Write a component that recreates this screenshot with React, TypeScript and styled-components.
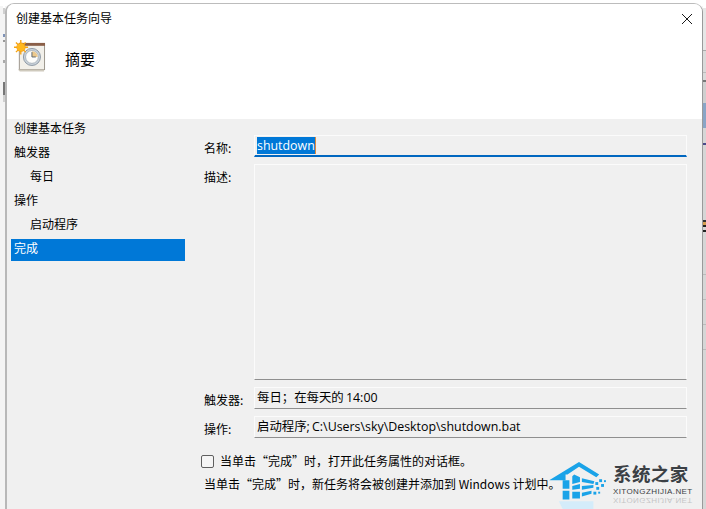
import React from 'react';
import styled, { createGlobalStyle } from 'styled-components';

const GlobalStyle = createGlobalStyle`
  html, body {
    margin: 0;
    padding: 0;
    background: #fff;
    overflow: hidden;
  }
`;

const FONT = `"Noto Sans CJK SC", "Noto Sans", sans-serif`;
const LATIN = `"Open Sans", "Noto Sans CJK SC", sans-serif`;

// slivers of whatever window lies behind the dialog
const Desktop = styled.div`
  position: relative;
  width: 706px;
  height: 509px;
  overflow: hidden;
  box-sizing: border-box;
  padding: 3px 3px 0 5px;
  font-family: ${FONT};
  font-size: 12px;
  color: #000;
  background-color: #f4f4f4;
  background-repeat: no-repeat;
  background-size: 2px 100%, 3px 100%, 100% 6px;
  background-position: 3px 0, right top, left top;
  background-image:
    linear-gradient(
      to bottom,
      #fff 0 8px, #cfcfcf 8px 14px, #f4f4f4 14px 34px, #7f93b8 34px 37px, #f4f4f4 37px 40px,
      #999 40px 42px, #f4f4f4 42px 60px, #aaa 60px 63px, #f4f4f4 63px 82px, #777 82px 95px,
      #d0d0d0 95px 102px, #f4f4f4 102px 100%
    ),
    linear-gradient(
      to bottom,
      #fff 0 8px, #e6e6e6 8px 50px, #aaa 50px 51px, #dadada 51px 72px, #bbb 72px 73px,
      #dadada 73px 80px, #777 80px 82px, #cfcfcf 82px 103px, #8aa5c6 103px 128px,
      #d6d6d6 128px 143px, #4a4a8a 143px 145px, #d6d6d6 145px 220px, #333 220px 222px,
      #d8a050 222px 225px, #222 225px 227px, #d6d6d6 227px 230px, #222 230px 232px, #d6d6d6 232px 274px,
      #bbb 274px 275px, #d6d6d6 275px 299px, #bbb 299px 300px, #d6d6d6 300px 324px,
      #bbb 324px 325px, #d6d6d6 325px 349px, #bbb 349px 350px, #d6d6d6 350px 100%
    ),
    linear-gradient(#fff, #fff);
`;

const Dialog = styled.div`
  height: 506px;
  display: flex;
  flex-direction: column;
  box-sizing: border-box;
  border-style: solid;
  border-color: #bcbcbc #9a9a9a transparent #b8b8b8;
  border-width: 1px 1px 0 2px;
  border-radius: 9px 9px 0 0;
  background: #f0f0f0;
  overflow: hidden;
`;

const Header = styled.header`
  flex: none;
  height: 115px;
  background: #fff;
  box-sizing: border-box;
  padding: 6px 9px 0 9px;
`;

const TitleBar = styled.div`
  display: flex;
  align-items: center;
  justify-content: space-between;
  height: 16px;
  line-height: 16px;
`;

const CloseButton = styled.button`
  display: flex;
  width: 12px;
  height: 12px;
  padding: 0;
  margin-top: 1px;
  border: 0;
  background: none;
`;

const Banner = styled.div`
  display: flex;
  align-items: center;
  margin: 14px 0 0 -2px;
  gap: 19px;
`;

const Heading = styled.h1`
  margin: 0;
  font-size: 15px;
  font-weight: 400;
  line-height: 20px;
  position: relative;
  top: 3px;
`;

const Body = styled.div`
  flex: 1;
  display: flex;
`;

const Sidebar = styled.nav`
  flex: none;
  width: 181px;
  box-sizing: border-box;
  padding-left: 4px;
  padding-right: 3px;
  display: flex;
  flex-direction: column;
  gap: 2px;
`;

const Step = styled.div<{ $indent?: boolean; $active?: boolean }>`
  height: 21px;
  padding-top: 1px;
  line-height: 16px;
  padding-left: ${(p) => (p.$indent ? '19px' : '3px')};
  background: ${(p) => (p.$active ? '#0078d7' : 'transparent')};
  color: ${(p) => (p.$active ? '#fff' : '#000')};
`;

const Main = styled.main`
  flex: 1;
  min-width: 0;
  box-sizing: border-box;
  padding: 16px 15px 0 16px;
`;

const SummaryGrid = styled.div`
  display: grid;
  grid-template-columns: 50px 1fr;
  grid-template-rows: 22px 216px 22px 22px;
  row-gap: 7px;
`;

const Label = styled.label`
  padding-top: 5px;
  line-height: 16px;
`;

const Field = styled.div<{ $focused?: boolean }>`
  box-sizing: border-box;
  padding: 1px 3px 0 2px;
  font-family: ${LATIN};
  font-size: 12.4px;
  line-height: 17px;
  word-spacing: -1px;
  white-space: nowrap;
  background: #f0f0f0;
  border: 1px solid #fbfbfb;
  border-bottom: ${(p) => (p.$focused ? '2px solid #0067c0' : '1px solid #8f8f8f')};
`;

const Selected = styled.span`
  display: inline-block;
  background: #0078d7;
  color: #fff;
  border-right: 1px solid #e08a3c;
`;

const CheckRow = styled.label`
  display: flex;
  align-items: center;
  gap: 6px;
  margin: 16px 0 0 -3px;
  height: 14px;
  line-height: 14px;
`;

const CheckBox = styled.span`
  flex: none;
  width: 11px;
  height: 11px;
  border: 1px solid #5f5f5f;
  border-radius: 2px;
  background: #f5f5f5;
`;

const Note = styled.p`
  margin: 8px 0 0;
  line-height: 16px;
  white-space: nowrap;
  font-size: 12px;
`;

const Watermark = styled.div`
  position: absolute;
  left: 548px;
  top: 460px;
  width: 158px;
  height: 49px;
  display: flex;
`;

const WatermarkText = styled.div`
  position: absolute;
  left: 65px;
  top: 2px;
  width: 80px;
`;

const BrandName = styled.div`
  font-size: 18.5px;
  font-weight: 700;
  line-height: 22px;
  letter-spacing: 0.4px;
  color: #3b4045;
  white-space: nowrap;
`;

const BrandUrl = styled.div`
  font-family: "Liberation Sans", sans-serif;
  font-size: 8px;
  line-height: 9px;
  margin-top: 3px;
  letter-spacing: 0.4px;
  color: #3b4045;
  white-space: nowrap;
`;

const BrandMirror = styled(BrandUrl)`
  margin-top: 0;
  transform: scaleY(-1);
  opacity: 0.25;
`;

function TaskIcon() {
  return (
    <svg width="32" height="32" viewBox="0 0 33 33">
      <rect x="5.5" y="4.5" width="26" height="26" fill="#f2f0ea" stroke="#9a948a" />
      <rect x="5" y="3" width="27" height="3" fill="#8a5f48" />
      <path d="M4 30.5h27v2H6z" fill="#cfcabd" />
      <circle cx="18.5" cy="17.5" r="8.8" fill="#c9d2da" stroke="#8d99a5" />
      <circle cx="18.5" cy="17.5" r="6.6" fill="#fdfdfb" stroke="#aab4bd" />
      <path d="M18.5 11.5a6 6 0 0 1 6 6h-6z" fill="#ecc98d" />
      <path d="M18.5 12.5v5h4" fill="none" stroke="#5c6670" strokeWidth="1" />
      <g stroke="#f6a312" strokeWidth="1.4">
        <path d="M7 0v15M0 7.5h14.5M2 2.5l10 10M12 2.5l-10 10" />
      </g>
      <circle cx="7.2" cy="7.5" r="4.4" fill="#ffb81f" stroke="#f59a0c" strokeWidth="0.6" />
    </svg>
  );
}

function CloseIcon() {
  return (
    <svg width="12" height="12" viewBox="0 0 12 12">
      <path d="M1 1l10 10M11 1L1 11" stroke="#1a1a1a" strokeWidth="1" fill="none" />
    </svg>
  );
}

function HouseLogo() {
  return (
    <svg width="62" height="49" viewBox="0 0 62 51">
      <g fill="#1aa3e8">
        <path d="M0 21L31 2l21 13-3 3-18-11-12 8h-2v6H10z" />
        <path d="M14 21h7v9h-7zM14 32h7v9h-7zM24 17l2-2 6 3v5l-8 2zM24 27l8-2v5l-8 1zM24 33h8v7h-8z" />
        <path d="M34 19l13 3-1 3-12-2zM34 27l12-1v3l-12 2zM34 34l10-2v3l-10 3z" />
        <rect x="48" y="23" width="3" height="3" />
        <rect x="52" y="20" width="3" height="3" />
        <rect x="49" y="28" width="3" height="3" />
        <rect x="54" y="25" width="3" height="3" />
        <rect x="46" y="33" width="3" height="3" />
        <rect x="51" y="33" width="2" height="2" />
        <rect x="57" y="21" width="2" height="2" />
      </g>
      <path d="M10 43h36v8H14z" fill="#d4ecfa" />
    </svg>
  );
}

const steps = [
  { label: '创建基本任务' },
  { label: '触发器' },
  { label: '每日', indent: true },
  { label: '操作' },
  { label: '启动程序', indent: true },
  { label: '完成', active: true },
];

export default function App() {
  return (
    <Desktop>
      <GlobalStyle />
      <Dialog>
        <Header>
          <TitleBar>
            <span>创建基本任务向导</span>
            <CloseButton>
              <CloseIcon />
            </CloseButton>
          </TitleBar>
          <Banner>
            <TaskIcon />
            <Heading>摘要</Heading>
          </Banner>
        </Header>
        <Body>
          <Sidebar>
            {steps.map((step) => (
              <Step key={step.label} $indent={step.indent} $active={step.active}>
                {step.label}
              </Step>
            ))}
          </Sidebar>
          <Main>
            <SummaryGrid>
              <Label>名称:</Label>
              <Field $focused>
                <Selected>shutdown</Selected>
              </Field>
              <Label>描述:</Label>
              <Field />
              <Label>触发器:</Label>
              <Field>每日；在每天的 14:00</Field>
              <Label>操作:</Label>
              <Field>启动程序; C:\Users\sky\Desktop\shutdown.bat</Field>
            </SummaryGrid>
            <CheckRow>
              <CheckBox />
              当单击“完成”时，打开此任务属性的对话框。
            </CheckRow>
            <Note>当单击“完成”时，新任务将会被创建并添加到 Windows 计划中。</Note>
          </Main>
        </Body>
      </Dialog>
      <Watermark>
        <HouseLogo />
        <WatermarkText>
          <BrandName>系统之家</BrandName>
          <BrandUrl>XITONGZHIJIA.NET</BrandUrl>
          <BrandMirror>XITONGZHIJIA.NET</BrandMirror>
        </WatermarkText>
      </Watermark>
    </Desktop>
  );
}
